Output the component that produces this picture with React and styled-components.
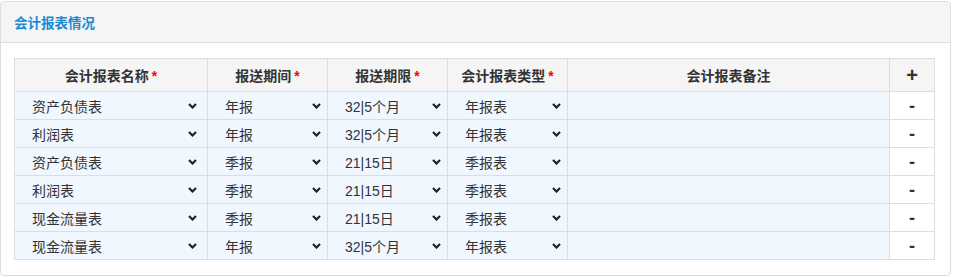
import React from 'react'
import styled, { createGlobalStyle } from 'styled-components'

const GlobalStyle = createGlobalStyle`
  body {
    margin: 0;
    background: #fff;
    font-family: "Liberation Sans", "Noto Sans CJK SC", sans-serif;
    font-size: 14px;
    color: #333;
  }
`

const Panel = styled.div`
  margin-top: 1px;
  width: 949px;
  border: 1px solid #ddd;
  border-radius: 4px;
  background: #fff;
`

const PanelHeader = styled.div`
  height: 40px;
  display: flex;
  align-items: center;
  padding: 0 13px;
  background: #f5f5f5;
  border-bottom: 1px solid #ddd;
  border-radius: 4px 4px 0 0;
  color: #1a8ad4;
  font-weight: bold;
  font-size: 13.5px;
`

const PanelBody = styled.div`
  padding: 15px 15px 15px 13px;
`

const Table = styled.table`
  width: 920px;
  border-collapse: collapse;
  table-layout: fixed;
  border: 1px solid #ddd;
`

const Th = styled.th`
  height: 32px;
  padding: 0;
  border: 1px solid #ddd;
  background: #f5f5f5;
  font-weight: bold;
  font-size: 14px;
  color: #333;
  text-align: center;
`

const Star = styled.span`
  color: #f00;
  margin-left: 3px;
  font-size: 14px;
`

const Td = styled.td`
  height: 27px;
  padding: 0;
  border: 1px solid #ddd;
  background: ${p => (p.$plain ? '#fff' : '#f0f7fe')};
  text-align: ${p => (p.$plain ? 'center' : 'left')};
`

const SelectBox = styled.div`
  position: relative;
  height: 27px;
  display: flex;
  align-items: center;
`

const SelectText = styled.span`
  padding-left: 17px;
  font-size: 14px;
  color: #333;
`

const Chevron = styled.svg`
  position: absolute;
  right: ${p => p.$right}px;
  top: 11px;
`

const SignButton = styled.span`
  font-weight: bold;
  font-size: ${p => (p.$big ? '20px' : '18px')};
  color: #333;
  line-height: 1;
  cursor: pointer;
`

const Select = ({ value, right = 6 }) => (
  <SelectBox>
    <SelectText>{value}</SelectText>
    <Chevron $right={right} width="9" height="6" viewBox="0 0 9 6">
      <path d="M1 1 L4.5 4.5 L8 1" fill="none" stroke="#222" strokeWidth="2.2" />
    </Chevron>
  </SelectBox>
)

const rows = [
  ['资产负债表', '年报', '32|5个月', '年报表'],
  ['利润表', '年报', '32|5个月', '年报表'],
  ['资产负债表', '季报', '21|15日', '季报表'],
  ['利润表', '季报', '21|15日', '季报表'],
  ['现金流量表', '季报', '21|15日', '季报表'],
  ['现金流量表', '年报', '32|5个月', '年报表'],
]

export default function App() {
  return (
    <>
      <GlobalStyle />
      <Panel>
        <PanelHeader>会计报表情况</PanelHeader>
        <PanelBody>
          <Table>
            <colgroup>
              <col style={{ width: 193 }} />
              <col style={{ width: 120 }} />
              <col style={{ width: 120 }} />
              <col style={{ width: 120 }} />
              <col style={{ width: 322 }} />
              <col style={{ width: 45 }} />
            </colgroup>
            <thead>
              <tr>
                <Th>会计报表名称<Star>*</Star></Th>
                <Th>报送期间<Star>*</Star></Th>
                <Th>报送期限<Star>*</Star></Th>
                <Th>会计报表类型<Star>*</Star></Th>
                <Th>会计报表备注</Th>
                <Th><SignButton $big>+</SignButton></Th>
              </tr>
            </thead>
            <tbody>
              {rows.map((r, i) => (
                <tr key={i}>
                  <Td><Select value={r[0]} right={10} /></Td>
                  <Td><Select value={r[1]} /></Td>
                  <Td><Select value={r[2]} /></Td>
                  <Td><Select value={r[3]} /></Td>
                  <Td />
                  <Td $plain><SignButton>-</SignButton></Td>
                </tr>
              ))}
            </tbody>
          </Table>
        </PanelBody>
      </Panel>
    </>
  )
}
